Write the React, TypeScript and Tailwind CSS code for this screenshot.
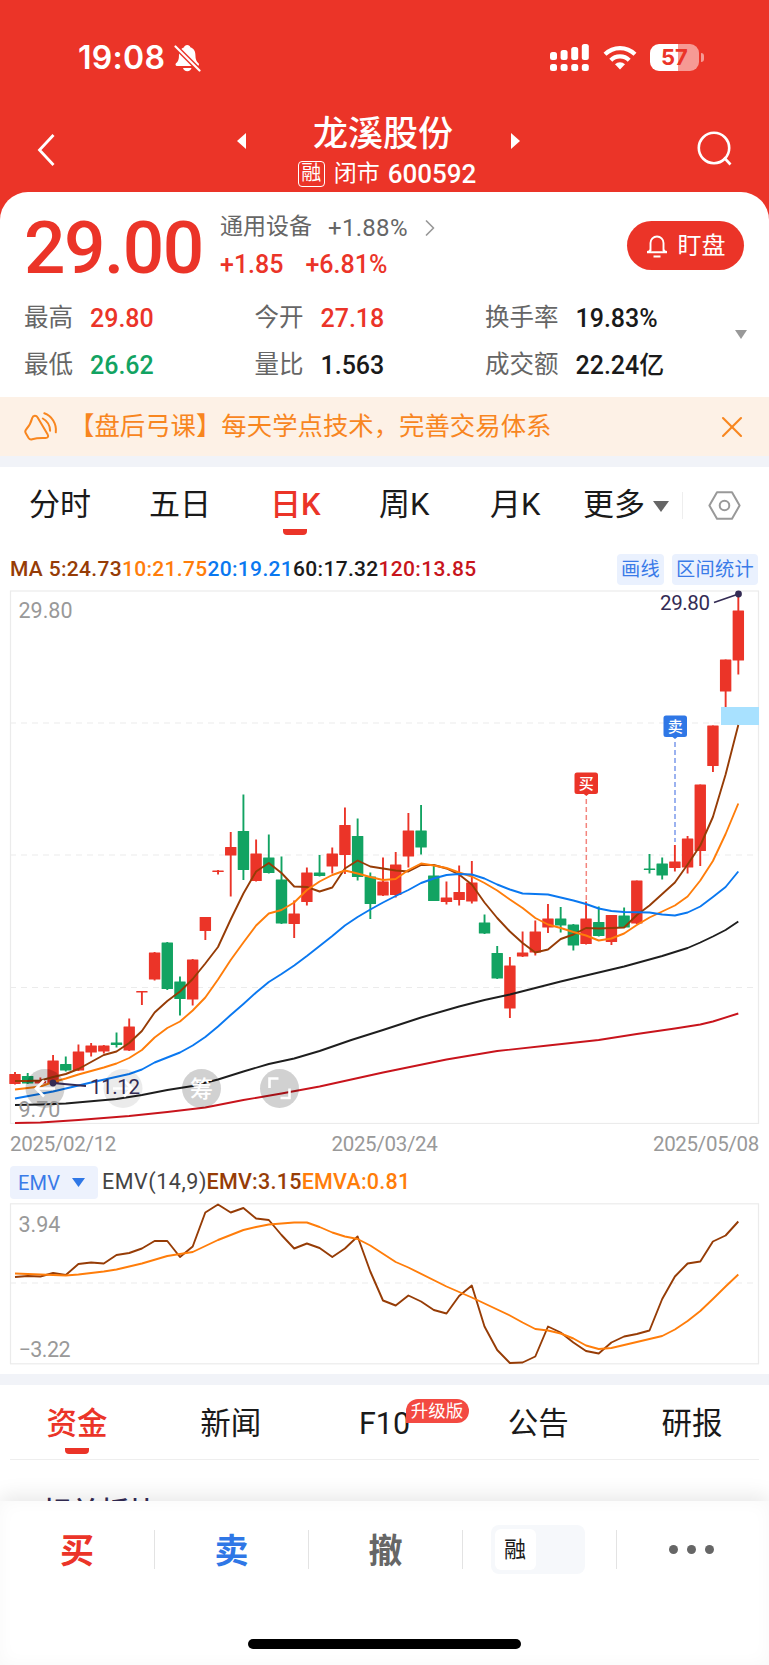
import { ChevronRight, X } from "lucide-react";

const RED = "#eb3428";
const GREEN = "#12a362";
const NAVY = "#332b54";

// [direction, body top, body bottom, high, low]
type Candle = ["r" | "g", number, number, number, number];

const candles: Candle[] = [
  ["r", 1074, 1084, 1072, 1084.5],
  ["g", 1076, 1083.5, 1073, 1084],
  ["r", 1081, 1083.5, 1077.5, 1084],
  ["r", 1060.5, 1083, 1055, 1083],
  ["g", 1064, 1070.5, 1056.5, 1071.5],
  ["r", 1051.5, 1070.5, 1044.5, 1071],
  ["r", 1045.5, 1052.5, 1043, 1056.5],
  ["r", 1045.5, 1051.5, 1045, 1053.5],
  ["g", 1042.5, 1045, 1032.5, 1047.5],
  ["r", 1026.5, 1050.5, 1018.5, 1051],
  ["r", 991, 992.5, 991, 1005],
  ["r", 952.5, 979.5, 952, 980.5],
  ["g", 942.5, 989, 942, 990],
  ["g", 981.5, 999, 976.5, 1015.5],
  ["r", 959.5, 999.5, 959, 1005.5],
  ["r", 917, 931, 917, 940],
  ["r", 870.5, 872, 870, 874.5],
  ["r", 847, 855.5, 832, 896.5],
  ["g", 831, 870, 794.5, 880],
  ["r", 853.5, 881, 839.5, 881.5],
  ["g", 857.5, 873, 834.5, 873.5],
  ["g", 879.5, 923.5, 856.5, 924],
  ["r", 913.5, 924, 900.5, 938],
  ["r", 872.5, 902, 867.5, 905.5],
  ["g", 872.5, 876, 855, 876.5],
  ["r", 853.5, 866.5, 847.5, 873.5],
  ["r", 825, 855, 807.5, 874],
  ["g", 836, 877, 818.5, 880.5],
  ["g", 876.5, 904, 872.5, 919],
  ["r", 881.5, 895.5, 857.5, 896],
  ["r", 864.5, 895, 852, 897.5],
  ["r", 830.5, 856.5, 813, 867.5],
  ["g", 830.5, 847.5, 805, 854.5],
  ["g", 875.5, 901, 865, 901],
  ["r", 897.5, 902, 881.5, 904.5],
  ["r", 892, 900, 865.5, 905.5],
  ["r", 882.5, 901.5, 861, 903.5],
  ["g", 922.5, 933.5, 914.5, 934],
  ["g", 953, 978.5, 946, 979],
  ["r", 965.5, 1008.5, 957, 1018],
  ["r", 952.5, 956.5, 931.5, 957],
  ["r", 931.5, 952.5, 920.5, 955.5],
  ["r", 918.5, 927.5, 904, 933],
  ["g", 918.5, 925.5, 907, 932.5],
  ["g", 924.5, 945.5, 924, 950.5],
  ["r", 918.5, 944, 901.5, 944.5],
  ["g", 922, 936, 906.5, 936.5],
  ["r", 915, 942, 915, 945],
  ["g", 915.5, 927.5, 907.5, 928],
  ["r", 880.5, 923.5, 880.5, 924],
  ["g", 868.5, 870, 854, 873.5],
  ["g", 863.5, 875.5, 857.5, 879.5],
  ["r", 861.5, 868, 845, 871.5],
  ["r", 838.5, 867.5, 836, 873.5],
  ["r", 784.5, 851, 784.5, 866],
  ["r", 725.5, 766, 725.5, 772],
  ["r", 659.5, 691.5, 659.5, 707],
  ["r", 610.5, 660.5, 595, 674.5],
];

type Pt = [number, number];
const seq = (ys: number[]): Pt[] => ys.map((y, i) => [i, y]);
const px = (i: number) => 15 + i * 12.69;
const toPoints = (pts: Pt[]) => pts.map(([i, y]) => `${px(i).toFixed(1)},${y}`).join(" ");

const ma5 = seq([
  1081, 1081, 1080.5, 1077, 1074, 1069, 1062, 1055, 1051.5, 1043, 1031, 1012.5, 1001, 991.5, 979, 963.5, 947, 919.5,
  893.5, 871.5, 863, 873, 886.5, 887, 891.5, 887.5, 868.5, 860.5, 866.5, 868.5, 870.5, 871.5, 865, 865, 868.5, 874.5,
  884.5, 902.5, 918, 931.5, 943, 952.5, 949.5, 939, 934.5, 928, 928.5, 928, 927.5, 915, 905.5, 894, 882.5, 864.5,
  845.5, 817, 774.5, 725,
]);
const ma10 = seq([
  1089.5, 1088, 1086.5, 1082, 1078.5, 1074.5, 1071, 1067.5, 1063.5, 1058, 1050, 1037.5, 1028, 1021.5, 1010.5, 997.5,
  979.5, 960, 942.5, 925.5, 913.5, 910, 902.5, 890, 881.5, 875, 870.5, 873.5, 877, 880, 879, 870, 863.5, 865.5, 868,
  872.5, 876.5, 883, 890.5, 899.5, 908, 918, 924.5, 928, 932, 935.5, 940.5, 938.5, 933.5, 925, 917.5, 911.5, 905.5,
  896.5, 880.5, 861, 834, 803.5,
]);
const ma20: Pt[] = [
  [0, 1098.5], [3, 1091.5], [6, 1082.5], [9, 1074], [10, 1069.5], [11, 1062.5], [12, 1057.5], [13, 1052.5],
  [14, 1045.5], [15, 1037], [16, 1026.5], [17, 1015], [18, 1004], [19, 992.5], [20, 982], [21, 974], [22, 965.5],
  [23, 956], [24, 946], [25, 936], [26, 925.5], [27, 917], [28, 909.5], [29, 902.5], [30, 896], [31, 890], [32, 883],
  [33, 878.5], [34, 875], [35, 874], [36, 874.5], [37, 878.5], [38, 884.5], [39, 889.5], [40, 893.5], [42, 894.5],
  [43, 897.5], [44, 900.5], [45, 904], [46, 908.5], [47, 911], [48, 912], [50, 912.5], [51, 914.5], [52, 915.5],
  [53, 912.5], [54, 906.5], [55, 897], [56, 887], [57, 871.5],
];
const ma60: Pt[] = [
  [0, 1105], [2, 1104.5], [4, 1103.5], [8, 1099], [10, 1095], [12, 1090], [14, 1086], [16, 1079.5], [18, 1071.5],
  [20, 1064], [22, 1058.5], [24, 1051], [26.5, 1040], [29, 1030], [32, 1017.5], [35, 1006.5], [37, 1000], [39, 994.5],
  [41, 988], [43, 981.5], [45, 975.5], [48, 966.5], [51, 956], [52, 952], [53, 948], [54, 942.5], [55, 936.5],
  [56, 930], [57, 921.5],
];
const ma120: Pt[] = [
  [0, 1123], [2, 1122.5], [5, 1120], [9, 1116], [12, 1112], [15, 1107.5], [18, 1100], [21, 1093.5], [24, 1086.5],
  [29, 1072.5], [34, 1059.5], [38, 1051], [42, 1045.5], [46, 1040], [49, 1034], [52, 1028.5], [54, 1024.5],
  [55, 1021.5], [57, 1013.5],
];

const emv = seq([
  1277, 1276, 1276.5, 1273, 1275, 1264, 1262.5, 1263.5, 1255, 1253, 1248.5, 1241, 1241, 1257, 1246.5, 1212.5, 1204.5,
  1212.5, 1208, 1218.5, 1220, 1235, 1248.5, 1243.5, 1248, 1257, 1248.5, 1236.5, 1271.5, 1300.5, 1305.5, 1295.5,
  1301.5, 1310, 1313.5, 1296, 1285.5, 1326.5, 1350, 1363, 1362.5, 1356.5, 1326.5, 1332.5, 1342.5, 1351, 1353.5,
  1342.5, 1336.5, 1334, 1330.5, 1299, 1276.5, 1263.5, 1261.5, 1241.5, 1235.5, 1221.5,
]);
const emva: Pt[] = [
  [0, 1273.5], [2, 1274.5], [4, 1275.5], [5, 1274.5], [7, 1271.5], [8, 1269.5], [10, 1263.5], [12, 1256], [13, 1254],
  [14, 1252], [16, 1240], [18, 1230], [19, 1227], [20, 1224.5], [22, 1222.5], [23, 1222.5], [24, 1227], [25, 1232.5],
  [26, 1236.5], [27, 1239], [28, 1245.5], [30, 1262], [31, 1267.5], [34, 1286.5], [36, 1297.5], [39, 1315.5],
  [40, 1322.5], [41, 1329], [42, 1330.5], [43, 1333.5], [44, 1338.5], [45, 1345.5], [46, 1349], [47, 1348],
  [48, 1345], [51, 1336], [52, 1329.5], [53, 1321], [54, 1311], [55, 1299], [56, 1286.5], [57, 1274.5],
];

export default function App() {
  return (
    <div className="w-[769px] h-[1665px] overflow-hidden bg-white font-['Roboto','Noto_Sans_CJK_SC',sans-serif] text-[#1a1a1a] flex flex-col whitespace-nowrap">
      <Header />
      <Quote />
      <Notice />
      <div className="h-[11px] shrink-0 bg-[#f1f3f8]" />
      <PeriodTabs />
      <MaRow />
      <KChart />
      <div className="h-[40px] shrink-0 px-[10px] flex items-center justify-between text-[20.500px] tracking-[-0.300px] text-[#999]">
        <span>2025/02/12</span>
        <span>2025/03/24</span>
        <span>2025/05/08</span>
      </div>
      <EmvRow />
      <EmvChart />
      <div className="h-[11px] shrink-0 bg-[#f1f3f8]" />
      <InfoTabs />
      <TradeBar />
    </div>
  );
}

function Header() {
  return (
    <div className="h-[220px] shrink-0 bg-[#eb3428] text-white -mb-7">
      <div className="h-[115px] pl-[78px] pr-[65px] flex items-center justify-between font-['Inter'] font-semibold">
        <div className="flex items-center gap-[7px]">
          <span className="text-[32px] w-[89px] tracking-[0.300px]">19:08</span>
          <svg className="w-[27px] h-[28px]" viewBox="0 0 27 28">
            <path d="M13.2 1c-1.8 0-2.8 1-3.1 2.2C6.6 4.4 5 7.300 5 11c0 4.500-1 6.500-3 8.300-.9.900-.5 2.700 1 2.700h20.500c1.500 0 1.900-1.800 1-2.700-2-1.800-3.100-3.800-3.100-8.300 0-3.700-1.500-6.600-5.100-7.800C16 2 15 1 13.200 1z" fill="white" />
            <path d="M9 24h8.500c-.4 2-2 3.200-4.200 3.200S9.400 26 9 24z" fill="white" />
            <path d="M-1 0L28 29" stroke={RED} strokeWidth="5" />
            <path d="M1.500 2.500L25.500 26.500" stroke="white" strokeWidth="2.200" strokeLinecap="round" />
          </svg>
        </div>
        <div className="flex items-center">
          <svg className="w-[39px] h-[27px]" viewBox="0 0 39 27" fill="white">
            {[8, 6, 3, 0].map((y, i) => (
              <g key={y}>
                <rect x={i * 10.6} y={y} width="7" height={16 - y} rx="2.500" />
                <rect x={i * 10.6} y="20" width="7" height="7" rx="2.500" />
              </g>
            ))}
          </svg>
          <svg className="ml-[14px] w-[34px] h-[25px]" viewBox="0 0 34 25" fill="none" stroke="white" strokeWidth="4.200">
            <path d="M2 9.300a21.300 21.300 0 0 1 30 0" />
            <path d="M7.800 15.200a13 13 0 0 1 18.400 0" />
            <path d="M17 24.500l-5-5.200a7.200 7.200 0 0 1 10 0z" fill="white" stroke="none" />
          </svg>
          <div className="ml-[13px] w-[49px] h-[27px] rounded-[9px] bg-linear-to-r from-white from-57% to-[#f69a94] to-57% flex items-center justify-center text-[22px] font-bold text-[#eb3428]">
            57
          </div>
          <div className="ml-[2px] w-[3px] h-[9px] rounded-r-full bg-[#f69a94]" />
        </div>
      </div>
      <div className="h-[77px] pl-[31px] pr-[36px] flex justify-between">
        <svg className="mt-[18px] w-[30px] h-[34px]" viewBox="0 0 30 34" fill="none" stroke="white" strokeWidth="2.800">
          <path d="M22.500 2L8.500 17l14 15" />
        </svg>
        <div className="flex flex-col items-center">
          <div className="flex items-center h-[38px] text-[35px] leading-[38px] font-medium">
            <svg className="w-[10px] h-[16px] mt-[14px] mr-[66px]" viewBox="0 0 10 16" fill="white">
              <path d="M0 8L9 0v16z" />
            </svg>
            <span className="mt-[2px]">龙溪股份</span>
            <svg className="w-[10px] h-[16px] mt-[14px] ml-[58px]" viewBox="0 0 10 16" fill="white">
              <path d="M9 8L0 0v16z" />
            </svg>
          </div>
          <div className="mt-[8px] flex items-center h-[26px] ml-[16px]">
            <span className="w-[27px] h-[26px] rounded-[4px] border-[1.500px] border-white text-[20px] leading-[22px] text-center">融</span>
            <span className="ml-[9px] text-[23px] leading-[26px]">闭市</span>
            <span className="ml-[8px] text-[26px] leading-[26px] font-medium">600592</span>
          </div>
        </div>
        <svg className="mt-[16px] w-[36px] h-[36px]" viewBox="0 0 36 36" fill="none" stroke="white" strokeWidth="2.600">
          <circle cx="17" cy="17" r="15.200" />
          <path d="M27 26.500l6.500 7" />
        </svg>
      </div>
    </div>
  );
}

function Quote() {
  const stats = [
    [["最高", "29.80", "text-[#eb3428]"], ["今开", "27.18", "text-[#eb3428]"], ["换手率", "19.83%", ""]],
    [["最低", "26.62", "text-[#12a362]"], ["量比", "1.563", ""], ["成交额", "22.24亿", ""]],
  ];
  return (
    <div className="relative h-[205px] shrink-0 rounded-t-[28px] bg-white px-[24px] pt-[20px]">
      <div className="flex items-start">
        <div className="w-[196px] text-[73px] leading-[72px] tracking-[-1.500px] font-medium text-[#eb3428]">29.00</div>
        <div className="flex-1 text-[24px]">
          <div className="h-[31px] flex items-center text-[#666]">
            <span className="text-[23px]">通用设备</span>
            <span className="ml-[16px] tracking-[0.300px]">+1.88%</span>
            <ChevronRight className="ml-[8px] w-[28px] h-[28px] text-[#999]" strokeWidth={1.5} />
          </div>
          <div className="mt-[7px] h-[30px] flex items-center gap-[22px] font-medium text-[#eb3428]">
            <span className="text-[25px]">+1.85</span>
            <span className="text-[25px]">+6.81%</span>
          </div>
        </div>
        <div className="mt-[9px] mr-px w-[117px] h-[49px] rounded-full bg-[#eb3428] text-white flex items-center justify-center gap-[10px]">
          <svg className="w-[22px] h-[24px]" viewBox="0 0 22 24" fill="none" stroke="white" strokeWidth="1.900">
            <path d="M4.500 17V9a6.500 6.500 0 0 1 13 0v8M1 18c2.500 0 3.500-1 3.500-3M21 18c-2.500 0-3.500-1-3.500-3M1 18.300h20M7.500 22.500h7" />
          </svg>
          <span className="text-[24px]">盯盘</span>
        </div>
      </div>
      <div className="mt-[11px]">
        {stats.map((row) => (
          <div key={row[0][0]} className="h-[47px] flex items-center text-[24.500px]">
            {row.map(([label, value, cls]) => (
              <div key={label} className="w-[230.500px] shrink-0 flex items-center">
                <span className="text-[#666]">{label}</span>
                <span className={`ml-[17px] text-[25px] font-medium ${cls}`}>{value}</span>
              </div>
            ))}
          </div>
        ))}
      </div>
      <svg className="absolute left-[735px] top-[138px] w-[12px] h-[9px]" viewBox="0 0 12 9" fill="#999">
        <path d="M0 0h12L6 9z" />
      </svg>
    </div>
  );
}

function Notice() {
  return (
    <div className="h-[59px] shrink-0 bg-[#fdf1e6] text-[#f8861f] flex items-center pl-[24px] pr-[19px]">
      <svg className="w-[34px] h-[30px]" viewBox="0 0 34 30" fill="none" stroke="#f8861f" strokeWidth="2" strokeLinecap="round" strokeLinejoin="round">
        <path d="M8.300 5.800C7.300 9.500 6.300 13 2.300 17.300c-1.200 1.300-1.300 2.700-.5 4l2.800 4.700c.9 1.400 2 1.800 3.600 1.300 4.500-1.500 8.500-1.500 13.300-1.300 2.300 0 3.200-1.500 2.200-3.400L13.500 5.300C12.300 3 9.200 3 8.300 5.800z" />
        <path d="M18.800 6.500c4.500 2.500 7.200 6.500 7.300 12.300M20.300 1.300c7.400 2.500 12.500 10.500 11.500 19" />
      </svg>
      <span className="ml-[11px] flex-1 text-[25.400px]">【盘后弓课】每天学点技术，完善交易体系</span>
      <X className="w-[36px] h-[36px]" strokeWidth={1.4} />
    </div>
  );
}

function PeriodTabs() {
  return (
    <div className="h-[80px] shrink-0 flex items-center pl-[29px] pb-[4px] text-[31px]">
      <span className="w-[120px]">分时</span>
      <span className="w-[121px]">五日</span>
      <span className="relative w-[109px] text-[#eb3428] font-medium">
        日K
        <i className="absolute left-[13px] top-[47px] w-[24px] h-[6px] rounded-b-[4px] bg-[#eb3428]" />
      </span>
      <span className="w-[111px]">周K</span>
      <span className="w-[93px]">月K</span>
      <span>更多</span>
      <svg className="ml-[8px] w-[16px] h-[11px] mt-[3px]" viewBox="0 0 16 11" fill="#666">
        <path d="M0 0h16L8 11z" />
      </svg>
      <span className="ml-[13px] w-px h-[27px] bg-[#eee]" />
      <svg className="ml-[25px] w-[33px] h-[29px]" viewBox="0 0 33 29" fill="none" stroke="#999" strokeWidth="2" strokeLinejoin="round">
        <path d="M9 1.200h15L31.600 14.500 24 27.800H9L1.400 14.500z" />
        <circle cx="16.500" cy="14.500" r="4.800" />
      </svg>
    </div>
  );
}

function MaRow() {
  return (
    <div className="h-[41px] shrink-0 pt-[4px] pl-[10px] pr-[11px] flex items-center text-[21px] tracking-[0.320px] font-medium">
      <span className="text-[#963c06]">MA 5:24.73</span>
      <span className="text-[#ff7d0a]">10:21.75</span>
      <span className="text-[#0a78f0]">20:19.21</span>
      <span className="text-[#1a1a1a]">60:17.32</span>
      <span className="text-[#c8141c]">120:13.85</span>
      <span className="ml-auto h-[31px] px-[4px] rounded-[4px] bg-[#eaf1fe] text-[#3a7be8] text-[19.200px] leading-[31px] font-normal">画线</span>
      <span className="ml-[8px] h-[31px] px-[4px] rounded-[4px] bg-[#eaf1fe] text-[#3a7be8] text-[19.200px] leading-[31px] font-normal">区间统计</span>
    </div>
  );
}

function KChart() {
  return (
    <svg className="shrink-0 w-[769px] h-[536px]" viewBox="0 588 769 536" fill="none">
      <rect x="10.500" y="591" width="748" height="532.500" stroke="#ebebeb" strokeWidth="1.200" />
      {[723, 855, 987.5].map((y) => (
        <path key={y} d={`M10 ${y}H759`} stroke="#ebebeb" strokeWidth="1.200" strokeDasharray="6 5" />
      ))}
      <rect x="721" y="707" width="38" height="18" fill="#a8e1ff" />
      {candles.map(([dir, top, bottom, high, low], i) => {
        const color = dir === "r" ? RED : GREEN;
        return (
          <g key={i}>
            <path d={`M${px(i)} ${high}V${low}`} stroke={color} strokeWidth="1.900" />
            <rect x={px(i) - 5.7} y={top} width="11.400" height={bottom - top} fill={color} rx="0.500" />
          </g>
        );
      })}
      <g strokeWidth="1.900" strokeLinejoin="round">
        <polyline points={toPoints(ma5)} stroke="#963c06" />
        <polyline points={toPoints(ma10)} stroke="#ff7d0a" />
        <polyline points={toPoints(ma20)} stroke="#0a78f0" />
        <polyline points={toPoints(ma60)} stroke="#1e1e1e" />
        <polyline points={toPoints(ma120)} stroke="#c8141c" />
      </g>

      {/* trade markers */}
      <path d="M586.300 799V901" stroke={RED} strokeOpacity="0.600" strokeWidth="1.500" strokeDasharray="5 3" />
      <path d="M675 742V842" stroke="#2f5fe0" strokeOpacity="0.500" strokeWidth="1.900" strokeDasharray="5 3" />
      <path d="M577 772.500h18.500a2.500 2.500 0 0 1 2.500 2.500v16.500a2.500 2.500 0 0 1-2.500 2.500h-6.700l-2.500 2-2.500-2H577a2.500 2.500 0 0 1-2.500-2.500V775a2.500 2.500 0 0 1 2.500-2.500z" fill={RED} />
      <path d="M666 715.500h18.500a2.500 2.500 0 0 1 2.500 2.500v16.500a2.500 2.500 0 0 1-2.500 2.500h-7l-2.500 2-2.500-2H666a2.500 2.500 0 0 1-2.500-2.500V718a2.500 2.500 0 0 1 2.500-2.500z" fill="#2f77e6" />
      <g fill="white" fontSize="15" fontWeight="500" textAnchor="middle">
        <text x="586.300" y="789">买</text>
        <text x="675.200" y="732">卖</text>
      </g>

      {/* floating controls */}
      {[45, 123, 201.5, 279.5].map((x, i) => (
        <circle key={x} cx={x} cy="1088.500" r="19.500" fill="#000" fillOpacity={i === 1 ? 0.08 : 0.18} />
      ))}
      <g stroke="white" strokeWidth="2.600">
        <path d="M55 1088.500H36M44 1080.500l-8 8 8 8" />
        <path d="M113 1088.500h19M124 1080.500l8 8-8 8" />
        <path d="M269.500 1088v-9.500h9M289.500 1088.500v9.500h-9" />
      </g>
      <text x="201.500" y="1097" fill="white" fontSize="23" fontWeight="500" textAnchor="middle">筹</text>

      <path d="M53 1083l33 3M714 602.500l24.500-8.500" stroke={NAVY} strokeWidth="1.800" />
      <circle cx="53" cy="1083" r="3.400" fill={NAVY} />
      <circle cx="738.500" cy="594" r="3.400" fill={NAVY} />
      <g fill={NAVY} fontSize="20.500">
        <text x="90" y="1093.500" textLength="50">11.12</text>
        <text x="660" y="610" textLength="50">29.80</text>
      </g>
      <g fill="#999" fontSize="21.500">
        <text x="18.500" y="618">29.80</text>
        <text x="18.500" y="1117">9.70</text>
      </g>
    </svg>
  );
}

function EmvRow() {
  return (
    <div className="h-[38px] shrink-0 pl-[10px] pb-px flex items-center text-[21.500px] tracking-[0.250px]">
      <span className="w-[88px] h-[33px] mr-[4px] pl-[8px] rounded-[4px] bg-[#edf2fd] text-[#3a7be8] text-[20px] flex items-center">
        EMV
        <svg className="ml-[12px] w-[13px] h-[9px]" viewBox="0 0 13 9" fill="#2f77e6">
          <path d="M0 0h13L6.500 9z" />
        </svg>
      </span>
      <span className="w-[104.500px] text-[#444] tracking-[0.550px]">EMV(14,9)</span>
      <span className="font-medium text-[#963c06]">EMV:3.15</span>
      <span className="font-medium text-[#ff7d0a]">EMVA:0.81</span>
    </div>
  );
}

function EmvChart() {
  return (
    <svg className="shrink-0 w-[769px] h-[172px]" viewBox="0 1202 769 172" fill="none">
      <rect x="10.500" y="1203.800" width="748" height="160" stroke="#ebebeb" strokeWidth="1.200" />
      <path d="M10 1283H759" stroke="#ebebeb" strokeWidth="1.200" strokeDasharray="6 5" />
      <g strokeWidth="1.900" strokeLinejoin="round">
        <polyline points={toPoints(emv)} stroke="#963c06" />
        <polyline points={toPoints(emva)} stroke="#ff7d0a" />
      </g>
      <g fill="#999" fontSize="21.500">
        <text x="18.500" y="1232">3.94</text>
        <text x="18.500" y="1357" textLength="52">−3.22</text>
      </g>
    </svg>
  );
}

function InfoTabs() {
  const tabs = ["资金", "新闻", "F10", "公告", "研报"];
  return (
    <div className="h-[116px] shrink-0 px-[10px]">
      <div className="h-[74px] -mx-[10px] flex text-[30.500px] leading-[78px]">
        {tabs.map((tab, i) => (
          <div key={tab} className={`relative flex-1 text-center ${i === 0 ? "text-[#eb3428] font-medium" : ""}`}>
            {tab}
            {i === 0 && <i className="absolute left-[65px] top-[63px] w-[24px] h-[6px] rounded-b-[4px] bg-[#eb3428]" />}
            {tab === "F10" && (
              <span className="absolute left-[98px] top-[14px] w-[63px] h-[24px] rounded-full rounded-bl-[6px] bg-[#f34a42] text-[17.500px] leading-[24px] text-white">
                升级版
              </span>
            )}
          </div>
        ))}
      </div>
      <div className="h-px bg-[#eee]" />
      <div className="pl-[32px] pt-[33px] text-[29px] leading-[40px] font-medium text-[#332b54]">相关板块</div>
    </div>
  );
}

function TradeBar() {
  return (
    <div className="relative h-[164px] shrink-0 bg-white shadow-[0_-4px_20px_rgba(0,0,0,0.1),inset_0_0_18px_rgba(0,0,0,0.03)] flex flex-col">
      <div className="h-[97px] flex items-center text-[34px] leading-[40px] font-bold">
        <div className="w-[154px] pt-[3px] text-center text-[#eb3428]">买</div>
        <i className="w-px h-[39px] bg-[#e3e3e3]" />
        <div className="w-[153px] pt-[3px] text-center text-[#2f77e6]">卖</div>
        <i className="w-px h-[39px] bg-[#e3e3e3]" />
        <div className="w-[153px] pt-[3px] text-center text-[#666]">撤</div>
        <i className="w-px h-[39px] bg-[#e3e3e3]" />
        <div className="w-[153px] pr-[4px] flex justify-center">
          <div className="w-[94px] h-[49px] rounded-[8px] bg-[#f6f8fb] p-[4px]">
            <div className="w-[41px] h-[41px] rounded-[6px] bg-white text-[22px] leading-[42px] font-normal text-center">融</div>
          </div>
        </div>
        <i className="w-px h-[39px] bg-[#e3e3e3]" />
        <div className="flex-1 pr-[4px] flex justify-center gap-[9px]">
          <i className="w-[9px] h-[9px] rounded-full bg-[#666]" />
          <i className="w-[9px] h-[9px] rounded-full bg-[#666]" />
          <i className="w-[9px] h-[9px] rounded-full bg-[#666]" />
        </div>
      </div>
      <div className="mt-[41px] mx-auto w-[273px] h-[10px] rounded-full bg-black" />
    </div>
  );
}
